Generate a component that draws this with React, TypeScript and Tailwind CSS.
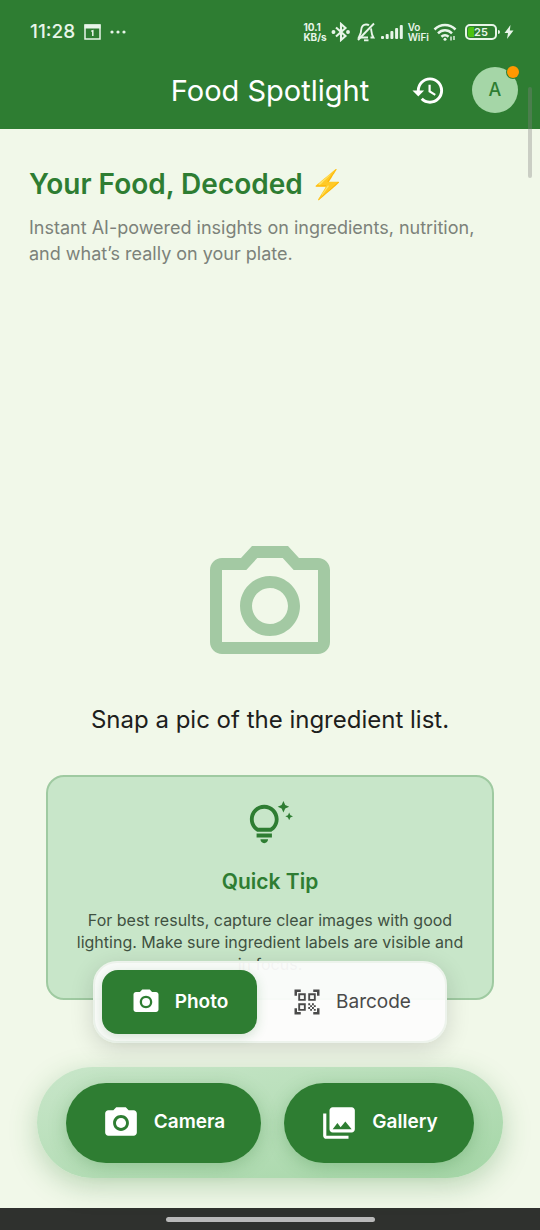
import {
  MdOutlinePhotoCamera,
  MdPhotoCamera,
  MdPhotoLibrary,
  MdHistory,
  MdOutlineTipsAndUpdates,
  MdQrCodeScanner,
} from "react-icons/md";

const StatusBar = () => {
  return (
    <div className="flex h-16 items-center justify-between pl-[30px] pr-[26px] text-[#e8f5e9]">
      <div className="flex items-center gap-2">
        <span className="text-[19px] font-medium">11:28</span>
        <svg viewBox="0 0 18 16" className="ml-px h-4 w-[18px]">
          <rect x="1" y="1" width="15" height="14" fill="none" stroke="currentColor" strokeWidth="1.5" />
          <rect x="0.5" y="0.5" width="16" height="4" fill="currentColor" />
          <path d="M7.3 7.3 L8.8 6.8 V12" fill="none" stroke="currentColor" strokeWidth="1.5" />
        </svg>
        <svg viewBox="0 0 18 4" className="h-1 w-[18px]" fill="currentColor">
          <circle cx="2" cy="2" r="1.6" />
          <circle cx="8" cy="2" r="1.6" />
          <circle cx="14" cy="2" r="1.6" />
        </svg>
      </div>
      <div className="flex items-center gap-1">
        <div className="text-[10px] font-bold leading-[10px]">
          <div>10.1</div>
          <div>KB/s</div>
        </div>
        <svg viewBox="0 0 20 20" className="h-5 w-5" fill="none" stroke="currentColor" strokeWidth="2.1">
          <path d="M5 5.5 L14.5 14 L10 18 V2 L14.5 6 L5 14.5" />
          <circle cx="2.5" cy="10" r="0.9" fill="currentColor" />
          <circle cx="17" cy="10" r="0.9" fill="currentColor" />
        </svg>
        <svg viewBox="0 0 20 20" className="ml-px h-5 w-5" fill="none" stroke="currentColor" strokeWidth="1.9">
          <path d="M13 3.3 C11.5 2.2 8.5 2.2 6.8 3.8 C4.6 5.8 5.4 9 4.6 11.5 L2.8 15.5 H12" />
          <path d="M15 6.5 C15.6 9 15 11.5 17.4 15.5 H14.5" />
          <path d="M18 1.5 L2 18" />
          <path d="M8 18.3 H12.5" />
        </svg>
        <svg viewBox="0 0 24 18" className="h-[18px] w-6" fill="currentColor">
          <rect x="1" y="13" width="3" height="3" rx="1" />
          <rect x="5.7" y="11" width="3" height="5" rx="1" />
          <rect x="10.4" y="8" width="3" height="8" rx="1" />
          <rect x="15.1" y="5" width="3" height="11" rx="1" />
          <rect x="19.8" y="2" width="3" height="14" rx="1" />
        </svg>
        <div className="text-[10px] font-semibold leading-[10px]">
          <div>Vo</div>
          <div>WiFi</div>
        </div>
        <svg viewBox="0 0 24 20" className="h-5 w-6" fill="none" stroke="currentColor" strokeWidth="2.5">
          <path d="M1.5 7.5 C7.5 1.5 16.5 1.5 22.5 7.5" />
          <path d="M5 11.3 C9 7.3 15 7.3 19 11.3" />
          <path d="M8.4 14.7 C10.5 12.8 13.5 12.8 15.6 14.7" />
          <circle cx="12" cy="17.3" r="1.5" fill="currentColor" stroke="none" />
          <path d="M18 14.5 V18.5 M21 14 V18" strokeWidth="1.4" />
        </svg>
        <div className="ml-1 flex items-center gap-px">
          <div className="relative flex h-4 w-8 items-center justify-center rounded-[5px] border-2 border-[#e8f5e9]">
            <div className="absolute inset-y-px left-px w-[6px] rounded-l-[2px] bg-[#4cc211]" />
            <span className="relative text-[11px] font-semibold leading-none">25</span>
          </div>
          <div className="h-1 w-[2px] rounded-r bg-[#e8f5e9]" />
        </div>
        <svg viewBox="0 0 10 14" className="h-[14px] w-[10px]" fill="currentColor">
          <path d="M6.5 0 L0.5 8 H4 L3 14 L9.5 5.5 H5.8 Z" />
        </svg>
      </div>
    </div>
  );
};

const AppBar = () => {
  return (
    <header className="bg-[#2e7d32]">
      <StatusBar />
      <div className="grid h-[65px] grid-cols-[1fr_auto_1fr] items-start px-[22px]">
        <h1 className="col-start-2 pt-2 text-[29px] leading-[38px] text-white">Food Spotlight</h1>
        <div className="flex items-center justify-end gap-[26px] pt-[3px]">
          <button aria-label="History" className="text-white">
            <MdHistory size={35} />
          </button>
          <button className="relative flex size-[46px] items-center justify-center rounded-full bg-[#a5d6a7] text-lg font-medium text-[#2e7d32]">
            A
            <span className="absolute -right-px -top-px size-3 rounded-full bg-[#ff9800] ring-1 ring-[#2e7d32]" />
          </button>
        </div>
      </div>
    </header>
  );
};

const QuickTip = () => {
  return (
    <section className="mx-[46px] mt-[39px] flex h-[225px] flex-col items-center rounded-[18px] border-2 border-[#9fcaa1] bg-[#c8e6c9] px-5 pt-6 text-center">
      <MdOutlineTipsAndUpdates size={46} className="text-[#2e7d32]" />
      <h3 className="mt-5 text-[21px] font-semibold leading-[30px] text-[#2e7d32]">Quick Tip</h3>
      <p className="mt-3 text-[16px] leading-[22px] text-[#3f5141]">
        For best results, capture clear images with good lighting. Make sure ingredient labels are visible and in focus.
      </p>
    </section>
  );
};

const ModeToggle = () => {
  return (
    <div className="flex h-[82px] w-[354px] rounded-[24px] border-2 border-[#edf3ec] bg-[#fcfcfc]/95 p-[7px] shadow-[0_6px_24px_rgba(0,0,0,0.14)]">
      <button className="flex w-[155px] items-center justify-center gap-[14px] rounded-[16px] bg-[#2e7d32] text-[19px] font-semibold text-white shadow-[0_3px_12px_rgba(46,125,50,0.2)]">
        <MdPhotoCamera size={30} />
        Photo
      </button>
      <button className="flex flex-1 items-center justify-center gap-[14px] pl-2 text-[19px] text-[#4a4a4a]">
        <MdQrCodeScanner size={30} />
        Barcode
      </button>
    </div>
  );
};

const CaptureBar = () => {
  return (
    <div className="flex h-[111px] w-full items-center gap-[23px] rounded-full bg-linear-to-br from-[#c8e6c9] to-[#a5d6a7] px-[29px] shadow-[0_8px_28px_rgba(46,125,50,0.28)]">
      <button className="flex h-20 flex-[195] items-center justify-center gap-[14px] rounded-full bg-[#2e7d32] text-[19px] font-semibold text-white shadow-[0_4px_18px_rgba(46,125,50,0.28)]">
        <MdPhotoCamera size={38} />
        Camera
      </button>
      <button className="flex h-20 flex-[190] items-center justify-center gap-[14px] rounded-full bg-[#2e7d32] text-[19px] font-semibold text-white shadow-[0_4px_18px_rgba(46,125,50,0.28)]">
        <MdPhotoLibrary size={38} />
        Gallery
      </button>
    </div>
  );
};

const App = () => {
  return (
    <div className="relative flex min-h-screen flex-col bg-[#f1f8e9] font-['Inter','Noto_Sans',sans-serif]">
      <AppBar />
      <main className="flex-1">
        <div className="px-[29px] pt-[37px]">
          <h2 className="text-[28px] font-semibold leading-9 text-[#2e7d32]">Your Food, Decoded ⚡</h2>
          <p className="mt-[13px] text-[18px] leading-[26px] text-[#7c827a]">
            Instant AI-powered insights on ingredients, nutrition, and what’s really on your plate.
          </p>
        </div>
        <div className="mt-[267px] flex flex-col items-center">
          <MdOutlinePhotoCamera size={144} className="text-[#a3c9a3]" />
          <p className="mt-[26px] text-[24px] leading-8 text-[#1d201c]">Snap a pic of the ingredient list.</p>
        </div>
        <QuickTip />
        <div className="relative -mt-[39px] flex flex-col items-center px-[37px] pb-[30px]">
          <ModeToggle />
          <div className="mt-6 w-full">
            <CaptureBar />
          </div>
        </div>
      </main>
      <div className="flex h-[22px] items-center justify-center bg-[#2f312e]">
        <div className="h-[5px] w-[209px] rounded-full bg-[#b9b9b9]" />
      </div>
      <div className="absolute right-2 top-[87px] h-[91px] w-1 rounded-full bg-[#808080]/35" />
    </div>
  );
};

export default App;
